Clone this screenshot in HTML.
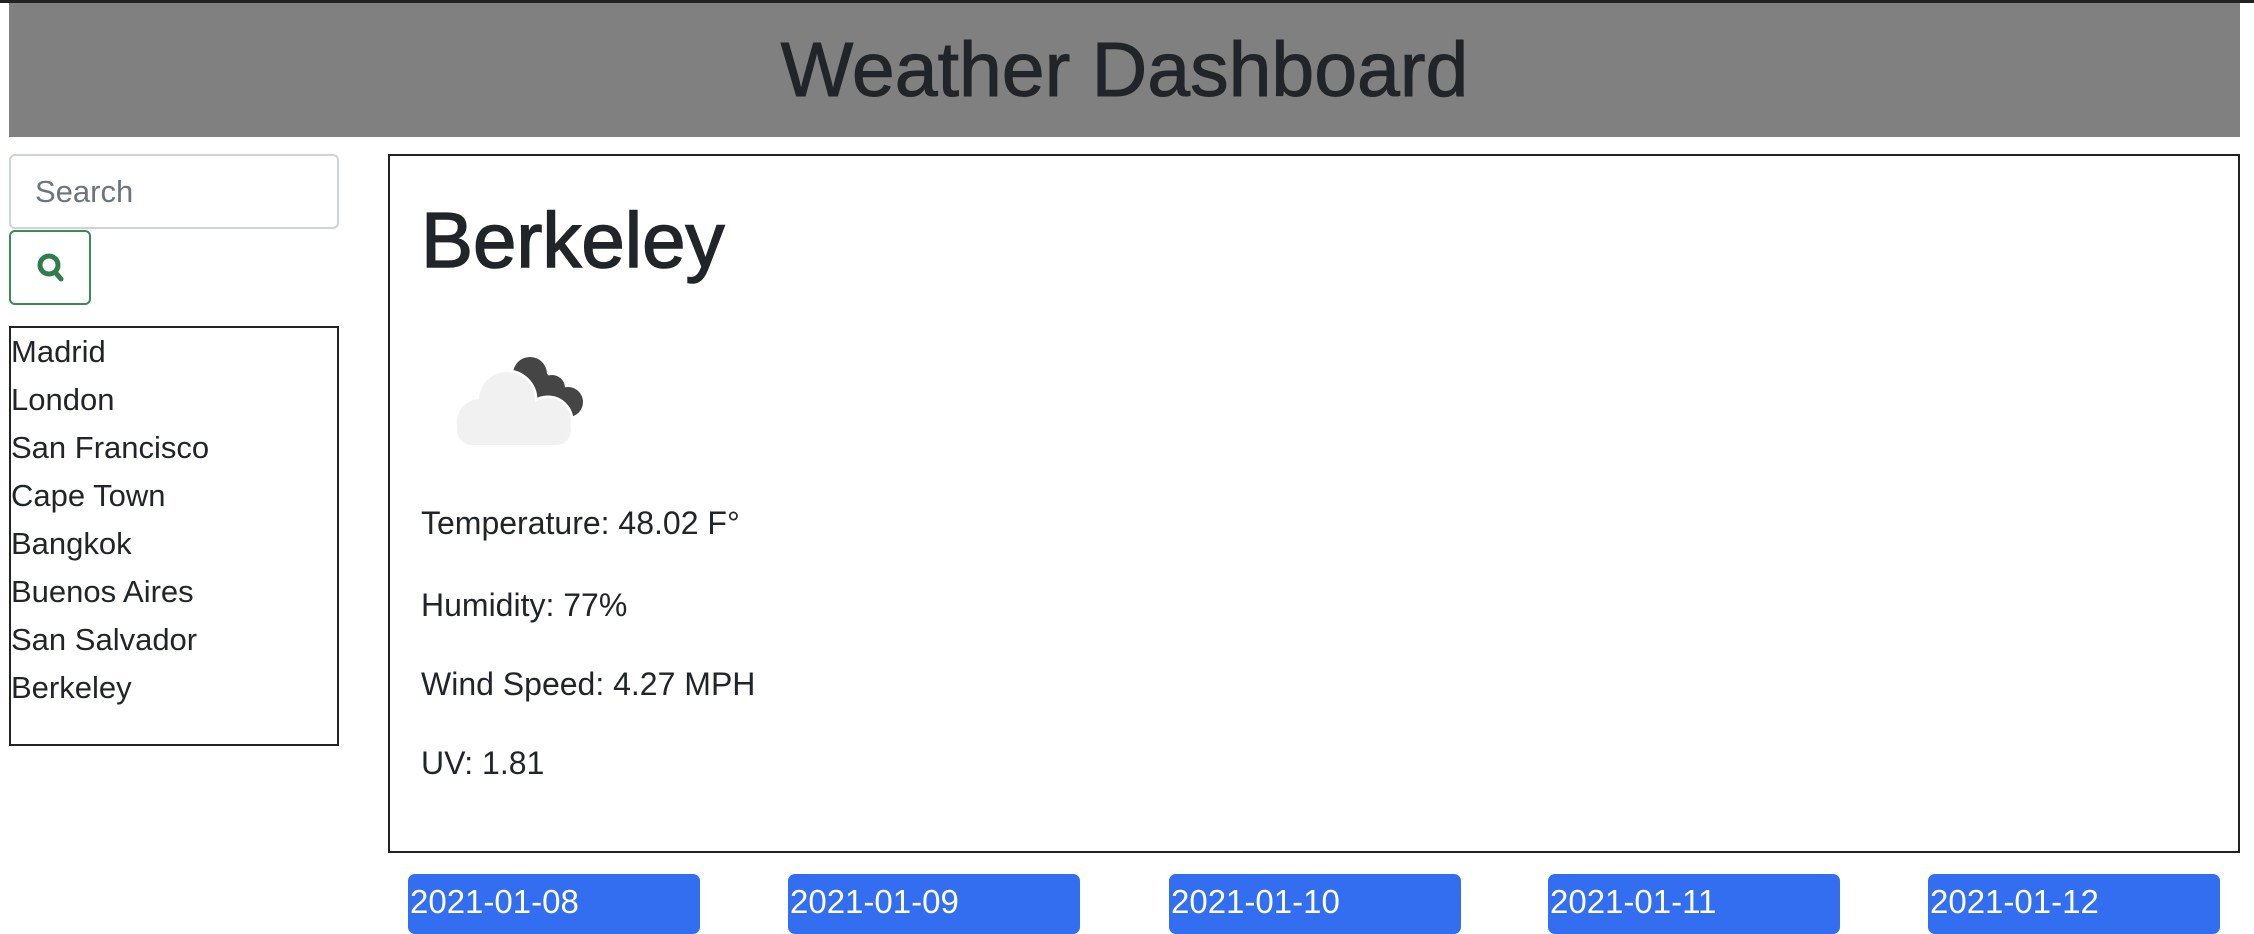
<!DOCTYPE html>
<html><head><meta charset="utf-8"><style>
*{box-sizing:border-box;margin:0;padding:0}
body{width:2254px;height:922px;overflow:hidden;background:#fff;font-family:"Liberation Sans",Arial,sans-serif;color:#212529;position:relative;font-size:32px}
.abs{position:absolute}
#top{left:0;top:0;width:2254px;height:3px;background:#222}
#hdr{left:9px;top:3px;width:2231px;height:134px;background:#808080;text-align:center;font-size:77px;line-height:134px;font-weight:500;color:#212529;-webkit-text-stroke:1px #212529}
#search{left:9px;top:154px;width:330px;height:75px;border:2px solid #ced4da;border-radius:6px;padding-left:24px;line-height:71px;color:#6c757d;font-size:31px}
#btn{left:9px;top:230px;width:82px;height:75px;border:2px solid #3b8a57;border-radius:6px}
#list{left:9px;top:326px;width:330px;height:420px;border:2px solid #222;line-height:48px;padding-top:0;font-size:31px}
#main{left:388px;top:154px;width:1852px;height:699px;border:2px solid #222}
#city{left:421px;top:190px;font-size:78px;font-weight:500;line-height:100px;-webkit-text-stroke:1.5px #212529}
.p{left:421px;font-size:32px;line-height:40px}
.card{top:874px;width:292px;height:60px;background:#336ef0;border-radius:7px;color:#fff;font-size:33px;line-height:56px;padding-left:2px}
</style></head><body>
<div class="abs" id="top"></div>
<div class="abs" id="hdr">Weather Dashboard</div>
<div class="abs" id="search">Search</div>
<div class="abs" id="btn"><svg width="82" height="75" viewBox="0 0 82 75" style="position:absolute;left:-2px;top:-2px"><circle cx="40" cy="35" r="9" fill="none" stroke="#2f7d4d" stroke-width="5"/><line x1="46" y1="42" x2="52" y2="49" stroke="#2f7d4d" stroke-width="5" stroke-linecap="round"/></svg></div>
<div class="abs" id="list">Madrid<br>London<br>San Francisco<br>Cape Town<br>Bangkok<br>Buenos Aires<br>San Salvador<br>Berkeley</div>
<div class="abs" id="main"></div>
<div class="abs" id="city">Berkeley</div>
<svg class="abs" style="left:450px;top:352px" width="150" height="100" viewBox="0 0 150 100">
<g fill="#454545"><circle cx="80" cy="22" r="17"/><circle cx="102" cy="36" r="13"/><circle cx="118" cy="50" r="15"/><path d="M66 30 L95 20 L132 55 L110 66 Z"/></g>
<g fill="#f1f1f1" stroke="#fff" stroke-width="3"><circle cx="57" cy="48" r="29"/><circle cx="30" cy="70" r="24"/><circle cx="98" cy="69" r="24"/><rect x="6" y="62" width="116" height="32" rx="16"/></g>
<g fill="#f1f1f1"><circle cx="57" cy="48" r="28"/><circle cx="30" cy="70" r="23"/><circle cx="98" cy="69" r="23"/><rect x="7" y="63" width="114" height="30" rx="15"/></g>
</svg>
<div class="abs p" style="top:503px">Temperature: 48.02 F°</div>
<div class="abs p" style="top:585px">Humidity: 77%</div>
<div class="abs p" style="top:664px">Wind Speed: 4.27 MPH</div>
<div class="abs p" style="top:743px">UV: 1.81</div>
<div class="abs card" style="left:408px">2021-01-08</div>
<div class="abs card" style="left:788px">2021-01-09</div>
<div class="abs card" style="left:1169px">2021-01-10</div>
<div class="abs card" style="left:1548px">2021-01-11</div>
<div class="abs card" style="left:1928px">2021-01-12</div>
</body></html>
